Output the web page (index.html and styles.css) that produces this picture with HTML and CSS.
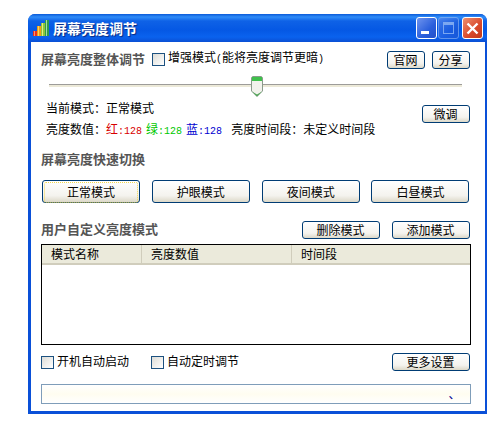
FILE: index.html
```html
<!DOCTYPE html>
<html lang="zh-CN">
    <head>
        <meta charset="utf-8">
        <title>屏幕亮度调节</title>
        <link rel="stylesheet" href="styles.css">
    </head>
    <body>
        <div class="window">
            <div class="titlebar">
                <svg class="app-icon" width="16" height="18" viewBox="0 0 16 18">
                    <rect x="0" y="12" width="4" height="5" fill="#e8301c"/>
                    <rect x="4" y="7" width="4" height="10" fill="#f09a1c"/>
                    <rect x="8" y="4" width="4" height="13" fill="#8cc63c"/>
                    <rect x="12" y="1" width="4" height="16" fill="#2f9a48"/>
                    <rect x="13" y="1" width="1" height="16" fill="#a8dca8"/>
                    <rect x="9" y="4" width="1" height="13" fill="#e4ee80"/>
                    <rect x="5" y="7" width="1" height="10" fill="#fbd858"/>
                    <rect x="1" y="12" width="1" height="5" fill="#f89070"/>
                </svg>
                <span class="title-text">屏幕亮度调节</span>
                <div class="title-buttons">
                    <div class="cap cap-min"><div class="min-glyph"></div></div>
                    <div class="cap cap-max"><div class="max-glyph"></div></div>
                    <div class="cap cap-close">
                        <svg width="13" height="13" viewBox="0 0 13 13">
                            <path d="M1.5 1.5 L11.5 11.5 M11.5 1.5 L1.5 11.5" stroke="#fff" stroke-width="2.4"/>
                        </svg>
                    </div>
                </div>
            </div>
            <div class="client">
                <div class="row row-top">
                    <span class="section-title">屏幕亮度整体调节</span>
                    <span class="checkbox check-first"></span>
                    <span class="label">增强模式<span class="num">(</span>能将亮度调节更暗<span class="num">)</span></span>
                    <div class="spacer"></div>
                    <button class="btn btn-small">官网</button>
                    <button class="btn btn-small">分享</button>
                </div>
                <div class="slider">
                    <div class="track"></div>
                    <svg class="thumb" width="12" height="21" viewBox="0 0 12 21">
                        <path d="M1.5 .5 H10.5 L11.5 1.5 V15 L6 20.5 L.5 15 V1.5 Z" fill="#f2f2ec" stroke="#8a9a8c"/>
                        <path d="M1 1 H11 V5 H1 Z" fill="#3fc04c"/>
                        <path d="M1 15.5 L6 20.5 L11 15.5 L6 18.5 Z" fill="#4aa352"/>
                    </svg>
                </div>
                <div class="info">
                    <div class="info-text">
                        <div class="info-line">当前模式<span class="colon">：</span>正常模式</div>
                        <div class="info-line">亮度数值<span class="colon">：</span><span class="red">红<span class="num">:128</span></span><span class="green">绿<span class="num">:128</span></span><span class="blue">蓝<span class="num">:128</span></span><span class="time-range">亮度时间段<span class="colon">：</span>未定义时间段</span></div>
                    </div>
                    <button class="btn btn-tune">微调</button>
                </div>
                <div class="section-title quick-title">屏幕亮度快速切换</div>
                <div class="quick-buttons">
                    <button class="btn btn-focus"><span>正常模式</span></button>
                    <button class="btn">护眼模式</button>
                    <button class="btn">夜间模式</button>
                    <button class="btn">白昼模式</button>
                </div>
                <div class="row row-custom">
                    <span class="section-title">用户自定义亮度模式</span>
                    <div class="spacer"></div>
                    <button class="btn btn-mode">删除模式</button>
                    <button class="btn btn-mode">添加模式</button>
                </div>
                <div class="list">
                    <div class="list-head">
                        <div class="col col1">模式名称</div>
                        <div class="col col2">亮度数值</div>
                        <div class="col col3">时间段</div>
                    </div>
                </div>
                <div class="row row-bottom">
                    <span class="checkbox"></span>
                    <span class="label label-auto">开机自动启动</span>
                    <span class="checkbox"></span>
                    <span class="label">自动定时调节</span>
                    <div class="spacer"></div>
                    <button class="btn btn-mode">更多设置</button>
                </div>
                <div class="status"><span class="status-mark">、</span></div>
            </div>
        </div>
    </body>
</html>
```

FILE: styles.css
```css
body {
    margin: 0;
    background-color: white;
    font-family: "Noto Sans CJK SC", "Liberation Sans", sans-serif;
    font-size: 12px;
    color: #000;
}

.window {
    width: 459px;
    height: 400px;
    margin: 14px 0 0 28px;
    display: flex;
    flex-direction: column;
    box-sizing: border-box;
    border-radius: 7px 7px 0 0;
    background-color: #0a50d8;
}

.titlebar {
    height: 28px;
    flex: none;
    display: flex;
    align-items: center;
    padding: 0 4px 0 5px;
    border-radius: 7px 7px 0 0;
    background: linear-gradient(180deg, #0a5ad8 0, #2f8cf8 3px, #0f62e6 7px, #0558e4 16px, #0a62ee 23px, #0a4fd4 28px);
}

.app-icon {
    margin-right: 4px;
}

.title-text {
    font-size: 14px;
    font-weight: bold;
    color: white;
    text-shadow: 1px 1px 1px #0a2a80;
}

.title-buttons {
    margin-left: auto;
    display: flex;
    gap: 1px;
}

.cap {
    width: 19px;
    height: 20px;
    border: 1px solid white;
    border-radius: 3px;
    display: flex;
    align-items: center;
    justify-content: center;
    position: relative;
    background: linear-gradient(135deg, #6f94ee, #2a5fdc 60%, #2450c8);
}

.cap-max {
    opacity: .55;
    margin-right: 2px;
    border-color: #a8c0f0;
}

.cap-close {
    background: linear-gradient(135deg, #ee9070, #d8482a 60%, #c03a1c);
}

.min-glyph {
    width: 8px;
    height: 3px;
    background-color: white;
    position: absolute;
    left: 4px;
    bottom: 4px;
}

.max-glyph {
    width: 9px;
    height: 8px;
    border: 1px solid #d8e4fa;
    border-top-width: 3px;
}

.client {
    flex: 1;
    margin: 0 2.5px 3px 3px;
    padding: 8px 14px 0 10px;
    background-color: white;
    display: flex;
    flex-direction: column;
}

.row {
    display: flex;
    align-items: center;
}

.spacer {
    flex: 1;
}

.section-title {
    font-size: 13px;
    line-height: 13px;
    height: 16px;
    font-weight: bold;
    color: #555;
}

.label {
    line-height: 14px;
    margin-bottom: 2px;
    white-space: nowrap;
}

.num {
    font-family: "Liberation Mono", monospace;
    font-size: 10px;
}

.colon {
    font-family: "Noto Sans CJK TC", sans-serif;
}

.red {
    color: #d80000;
}

.green {
    color: #00c800;
    margin-left: 4px;
}

.blue {
    color: #0000d0;
    margin-left: 4px;
}

.checkbox {
    width: 11px;
    height: 11px;
    flex: none;
    border: 1px solid #1c5180;
    background: linear-gradient(135deg, #dcdcd7, #fff);
    margin-right: 3px;
}

.check-first {
    margin-left: 7px;
}

.btn {
    width: 98px;
    height: 23px;
    box-sizing: border-box;
    padding: 0;
    border: 1px solid #003c74;
    border-radius: 3px;
    background: linear-gradient(180deg, #fff, #f4f3ee 70%, #dcd8c8);
    font-family: inherit;
    font-size: 12px;
    line-height: 16px;
    color: #000;
}

.btn-small {
    width: 38px;
    height: 18px;
    margin-left: 7px;
}

.btn-small:last-child {
    margin-right: 1px;
}

.btn-tune {
    width: 48px;
    height: 18px;
    margin: 6px 0 0;
}

.btn-mode {
    width: 78px;
    height: 18px;
    margin-left: 12px;
}

.btn-focus {
    padding: 1px;
}

.btn-focus span {
    display: block;
    line-height: 18px;
    height: 19px;
    border: 1px dotted #f0d850;
    border-radius: 2px;
}

.slider {
    position: relative;
    height: 21px;
    flex: none;
    margin: 7px 9px 0 8px;
    display: flex;
    align-items: center;
}

.track {
    flex: 1;
    height: 1px;
    margin-top: -3px;
    background-color: #9d9c99;
    border-bottom: 2px solid #ece9d8;
}

.thumb {
    position: absolute;
    left: 202px;
    top: 0;
}

.info {
    display: flex;
    justify-content: space-between;
    align-items: flex-start;
    margin: 2px 1px 0 5px;
}

.info-line {
    height: 21px;
    line-height: 18px;
    white-space: nowrap;
}

.time-range {
    margin-left: 9px;
}

.quick-title {
    margin-top: 11px;
}

.quick-buttons {
    display: flex;
    justify-content: space-between;
    margin: 12px 1px 0;
}

.row-custom {
    margin-top: 18px;
    height: 18px;
    flex: none;
}

.btn-mode:last-child {
    margin-right: 1px;
}

.list {
    height: 101px;
    flex: none;
    box-sizing: border-box;
    margin-top: 5px;
    border: 1px solid black;
}

.list-head {
    display: flex;
    height: 20px;
    box-sizing: border-box;
    background-color: #ebeadb;
    border-bottom: 2px solid #d0cdbc;
}

.col {
    line-height: 18px;
    padding-left: 9px;
    box-sizing: border-box;
}

.col1 {
    width: 100px;
    border-right: 1px solid #d0cdbc;
}

.col2 {
    width: 150px;
    border-right: 1px solid #d0cdbc;
}

.row-bottom {
    margin-top: 8px;
    height: 18px;
    flex: none;
}

.label-auto {
    margin-right: 22px;
}

.status {
    height: 20px;
    flex: none;
    box-sizing: border-box;
    margin-top: 13px;
    border: 1px solid #7f9db9;
    background: linear-gradient(180deg, #fff, #fffdf0 50%, #fff);
    display: flex;
    justify-content: flex-end;
    align-items: center;
    padding-right: 9px;
}

.status-mark {
    color: #000090;
    line-height: 18px;
}
```
